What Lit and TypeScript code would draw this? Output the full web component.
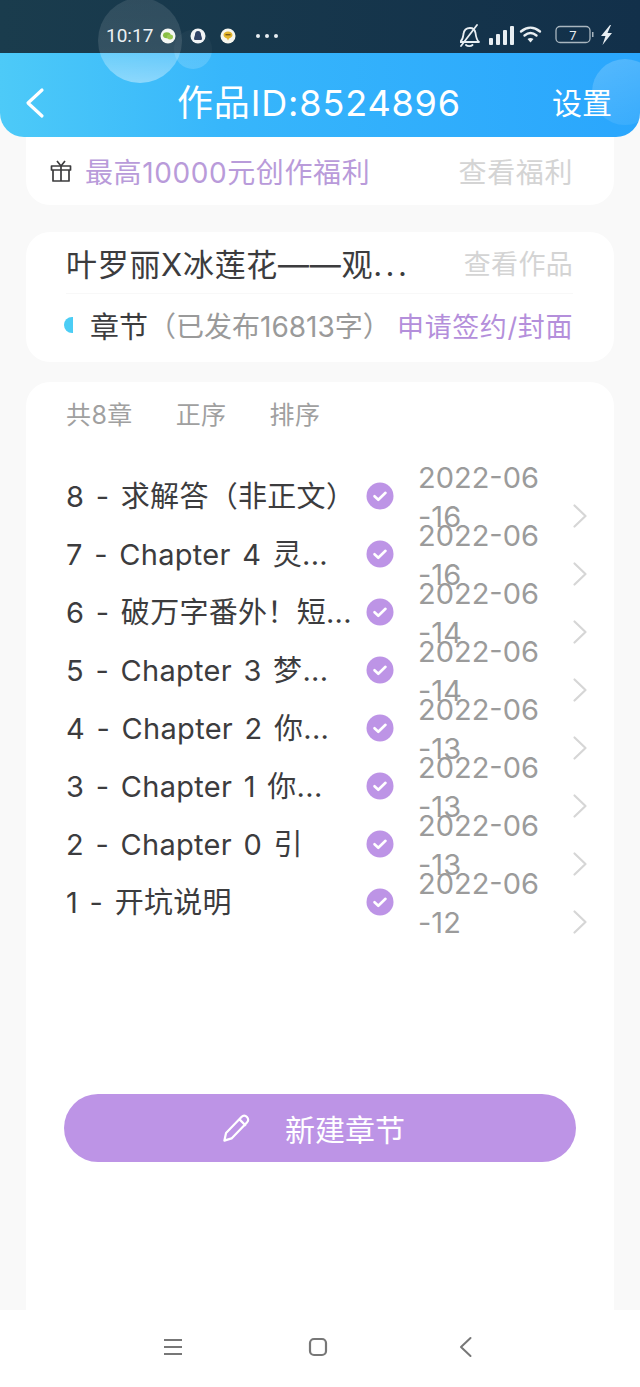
import { LitElement, html, css, svg } from "lit";
import { customElement } from "lit/decorators.js";

const chapters = [
  { title: "8 - 求解答（非正文）", date: "2022-06-16" },
  { title: "7 - Chapter 4 灵...", date: "2022-06-16" },
  { title: "6 - 破万字番外！短...", date: "2022-06-14" },
  { title: "5 - Chapter 3 梦...", date: "2022-06-14" },
  { title: "4 - Chapter 2 你...", date: "2022-06-13" },
  { title: "3 - Chapter 1 你...", date: "2022-06-13" },
  { title: "2 - Chapter 0 引", date: "2022-06-13" },
  { title: "1 - 开坑说明", date: "2022-06-12" },
];

const checkIcon = svg`<svg width="28" height="28" viewBox="0 0 28 28"><circle cx="14" cy="14" r="13.5" fill="#bd94e6"/><path d="M8.5 14.2l3.8 3.6 7.2-7" fill="none" stroke="#fff" stroke-width="2.6" stroke-linecap="round" stroke-linejoin="round"/></svg>`;

const chevron = svg`<svg width="16" height="26" viewBox="0 0 16 26"><path d="M2.5 2.5L13.5 13 2.5 23.5" fill="none" stroke="#d6d6d6" stroke-width="2.2" stroke-linecap="round" stroke-linejoin="round"/></svg>`;

@customElement("app-root")
export class AppRoot extends LitElement {
  static styles = css`
    :host {
      display: block;
      width: 640px;
      height: 1387px;
      overflow: hidden;
      position: relative;
      background: #f9f9f9;
      font-family: "Inter", "Noto Sans CJK SC", sans-serif;
      color: #3c3c3e;
    }
    .page {
      display: flex;
      flex-direction: column;
      height: 1387px;
    }
    .top {
      position: relative;
      z-index: 2;
      height: 137px;
      flex: none;
    }
    .top-bg {
      height: 137px;
      border-radius: 0 0 24px 24px;
      overflow: hidden;
      position: relative;
    }
    .status {
      height: 53px;
      display: flex;
      align-items: center;
      background: linear-gradient(90deg, #1a3c4d, #12304a);
      color: #e8eef2;
      box-sizing: border-box;
      padding: 18px 0 0 106px;
    }
    .time {
      font-family: "Roboto", sans-serif;
      font-size: 19px;
      width: 54px;
    }
    .notes {
      display: flex;
      gap: 14px;
      align-items: center;
    }
    .dots {
      display: flex;
      gap: 5px;
      margin-left: 20px;
    }
    .dots i {
      width: 4px;
      height: 4px;
      border-radius: 50%;
      background: #e8eef2;
    }
    .status-right {
      margin-left: auto;
      margin-right: 20px;
      display: flex;
      align-items: center;
    }
    .nav {
      height: 84px;
      box-sizing: border-box;
      background: linear-gradient(90deg, #4dcaf8, #37b6fb 35%, #2aa6fd);
      display: flex;
      align-items: center;
      justify-content: space-between;
      padding: 16px 28px 0 24px;
      color: #fff;
    }
    .nav .title {
      font-size: 36px;
      line-height: 44px;
      margin-left: 40px;
      letter-spacing: 0.85px;
    }
    .nav .set {
      font-size: 30px;
      line-height: 40px;
    }
    .bubble {
      position: absolute;
      border-radius: 50%;
      pointer-events: none;
    }
    .b1 {
      left: 98px;
      top: -2px;
      width: 84px;
      height: 85px;
      background: linear-gradient(180deg, rgba(255,255,255,0.1) 0, rgba(255,255,255,0.12) 65%, rgba(255,255,255,0.22) 65%, rgba(255,255,255,0.4) 100%);
    }
    .b2 {
      left: 174px;
      top: 30px;
      width: 38px;
      height: 39px;
      background: linear-gradient(180deg, rgba(255,255,255,0.03) 0, rgba(255,255,255,0.03) 59%, rgba(255,255,255,0.14) 59%, rgba(255,255,255,0.16) 100%);
    }
    .b3 {
      left: 592px;
      top: 59px;
      width: 66px;
      height: 66px;
      background: linear-gradient(160deg, rgba(255,255,255,0.2), rgba(255,255,255,0.06));
    }
    .content {
      flex: 1;
      display: flex;
      flex-direction: column;
      padding: 0 26px;
      min-height: 0;
    }
    .card {
      background: #fff;
      border-radius: 24px;
    }
    .welfare {
      margin-top: -24px;
      height: 92px;
      flex: none;
      box-sizing: border-box;
      padding: 24px 41px 0 24px;
      display: flex;
      align-items: center;
      font-size: 28px;
      letter-spacing: 0.6px;
    }
    .welfare svg {
      margin-right: 13px;
    }
    .purple {
      color: #b99bda;
    }
    .more {
      margin-left: auto;
      color: #d4d4d4;
    }
    .more-small {
      font-size: 27px;
      letter-spacing: 0.3px;
    }
    .work {
      margin-top: 27px;
      height: 130px;
      flex: none;
      box-sizing: border-box;
      padding: 0 41px 0 40px;
      font-size: 28px;
    }
    .work-top {
      height: 61px;
      display: flex;
      align-items: center;
      border-bottom: 1px solid #f8f8f8;
    }
    .work-name {
      white-space: nowrap;
      font-size: 31px;
      letter-spacing: 0.7px;
    }
    .work-name span {
      letter-spacing: 3.5px;
    }
    .work-sub {
      height: 62px;
      display: flex;
      align-items: center;
      margin-left: -2px;
    }
    .half {
      width: 9px;
      height: 16px;
      border-radius: 8px 0 0 8px;
      background: #4bcdf5;
      margin-right: 17px;
    }
    .sub-name {
      font-size: 29px;
    }
    .sub-count {
      color: #9a9a9a;
    }
    .sign {
      margin-left: auto;
      color: #b48fdb;
      font-size: 27px;
      letter-spacing: 0.6px;
    }
    .list {
      margin-top: 20px;
      flex: 1;
      border-radius: 24px 24px 0 0;
      padding: 0 38px 0 40px;
      display: flex;
      flex-direction: column;
    }
    .tools {
      display: flex;
      gap: 43px;
      height: 62px;
      align-items: center;
      font-size: 25px;
      letter-spacing: 0.4px;
      color: #a0a0a0;
    }
    .rows {
      margin-top: 23px;
    }
    .row {
      height: 58px;
      display: flex;
      align-items: center;
    }
    .row-title {
      width: 288px;
      white-space: nowrap;
      font-size: 29px;
      letter-spacing: 0.3px;
      word-spacing: 3px;
      flex: none;
      padding-bottom: 4px;
      box-sizing: border-box;
    }
    .row-check {
      flex: none;
      margin-left: 12px;
      display: flex;
    }
    .row-date {
      flex: none;
      width: 126px;
      margin-left: 24px;
      margin-top: 2px;
      font-size: 29px;
      line-height: 39px;
      color: #9b9b9b;
      word-break: break-all;
      height: 78px;
    }
    .row-arrow {
      margin-left: 28px;
      margin-top: 40px;
      display: flex;
    }
    .add {
      margin: 163px 0 0 -2px;
      width: 512px;
      height: 68px;
      box-sizing: border-box;
      padding-right: 15px;
      border-radius: 34px;
      background: #bd94e6;
      color: #fff;
      font-size: 30px;
      display: flex;
      align-items: center;
      justify-content: center;
      gap: 32px;
    }
    .sysnav {
      height: 77px;
      flex: none;
      box-sizing: border-box;
      background: #fff;
      display: flex;
      align-items: center;
      padding: 0 0 3px 163px;
    }
    .sysnav svg {
      display: block;
    }
    .sys-home {
      margin-left: 125px;
    }
    .sys-back {
      margin-left: 131px;
    }
  `;

  renderStatusRight() {
    return html`<svg width="160" height="26" viewBox="0 0 160 26">
      <g transform="translate(-3 0)" fill="none" stroke="#e8eef2" stroke-width="1.8" stroke-linecap="round" stroke-linejoin="round">
        <path d="M3 19c3-2 3-5 3.500-8 .5-4 3-6 6.500-6 3 0 5 2 5.500 5 .5 4 1 7 3.500 9z"/>
        <path d="M9 22c1.500 1.500 5 1.500 6.500 0"/>
        <path d="M4 23L20 2"/>
      </g>
      <g fill="#e8eef2">
        <rect x="29" y="15" width="4" height="7" rx="1"/>
        <rect x="36" y="11" width="4" height="11" rx="1"/>
        <rect x="43" y="7" width="4" height="15" rx="1"/>
        <rect x="50" y="3" width="4" height="19" rx="1"/>
      </g>
      <g fill="none" stroke="#e8eef2" stroke-width="2.400" stroke-linecap="round">
        <path d="M61 8.500c6-5 13-5 19 0"/>
        <path d="M64.500 12.500c4-3.300 8-3.300 12 0"/>
      </g>
      <path d="M67.500 16c2-1.500 4-1.500 6 0l-3 3.500z" fill="#e8eef2"/>
      <rect x="96" y="3.500" width="34" height="16" rx="4" fill="none" stroke="#a9b6bf" stroke-width="1.300"/>
      <rect x="132" y="9" width="1.500" height="5" fill="#a9b6bf"/>
      <text x="113" y="17" text-anchor="middle" fill="#e8eef2" font-size="13" font-family="Roboto, sans-serif">7</text>
      <path d="M150 2l-9 11h4.500l-3 9 9.500-12h-4.500l3.500-8z" fill="#e8eef2"/>
    </svg>`;
  }

  render() {
    return html`<div class="page">
      <div class="top">
        <div class="top-bg">
          <div class="status">
            <span class="time">10:17</span>
            <div class="notes">
              <svg width="16" height="16" viewBox="0 0 16 16"><circle cx="8" cy="8" r="7.500" fill="#f4f6f2"/><ellipse cx="6.800" cy="7.300" rx="3.800" ry="3" fill="#78b62c"/><ellipse cx="10" cy="9" rx="3" ry="2.400" fill="#8fc43f"/></svg>
              <svg width="16" height="16" viewBox="0 0 16 16"><circle cx="8" cy="8" r="7.500" fill="#f2f4f6"/><path d="M8 3c2 0 3 1.600 3 3.500 0 1 1 3 1 4.500 0 1-1.500 1-2 1H6c-.5 0-2 0-2-1 0-1.500 1-3.500 1-4.500C5 4.600 6 3 8 3z" fill="#2b3f63"/></svg>
              <svg width="16" height="16" viewBox="0 0 16 16"><circle cx="8" cy="8" r="7.500" fill="#f6f6ee"/><path d="M3.500 7c0-2 2-3.500 4.500-3.500S12.500 5 12.500 7 10.500 10 9 10.500L8 12.500l-1-2C5.500 10 3.500 9 3.500 7z" fill="#e3b52c"/><rect x="5.500" y="6" width="5" height="1.400" fill="#7a5a1b"/></svg>
            </div>
            <div class="dots"><i></i><i></i><i></i></div>
            <div class="status-right">${this.renderStatusRight()}</div>
          </div>
          <div class="nav">
            <svg width="22" height="32" viewBox="0 0 22 32"><path d="M18 3L4 16l14 13" fill="none" stroke="#fff" stroke-width="3.200" stroke-linecap="round" stroke-linejoin="round"/></svg>
            <span class="title">作品ID:8524896</span>
            <span class="set">设置</span>
          </div>
          <div class="bubble b1"></div>
          <div class="bubble b2"></div>
          <div class="bubble b3"></div>
        </div>
      </div>

      <div class="content">
        <div class="card welfare">
          <svg width="22" height="24" viewBox="0 0 22 24"><g fill="none" stroke="#3c3c3e" stroke-width="1.700" stroke-linejoin="round"><rect x="1.500" y="7" width="19" height="4"/><path d="M3 11v11h16V11M11 7v15"/><path d="M11 7L7 2M11 7l4-5"/></g></svg>
          <span class="purple">最高10000元创作福利</span>
          <span class="more">查看福利</span>
        </div>

        <div class="card work">
          <div class="work-top">
            <span class="work-name">叶罗丽X冰莲花——观<span>...</span></span>
            <span class="more more-small">查看作品</span>
          </div>
          <div class="work-sub">
            <i class="half"></i>
            <span class="sub-name">章节</span>
            <span class="sub-count">（已发布16813字）</span>
            <span class="sign">申请签约/封面</span>
          </div>
        </div>

        <div class="card list">
          <div class="tools"><span>共8章</span><span>正序</span><span>排序</span></div>
          <div class="rows">
            ${chapters.map(
              (c) => html`<div class="row">
                <span class="row-title">${c.title}</span>
                <span class="row-check">${checkIcon}</span>
                <span class="row-date">${c.date}</span>
                <span class="row-arrow">${chevron}</span>
              </div>`
            )}
          </div>
          <div class="add">
            <svg width="33" height="33" viewBox="0 0 30 30"><path d="M4 26l1.500-7L19.500 4.500c1.500-1.500 3.500-1.500 5 0s1.500 3.500 0 5L10.500 24z M17.500 6.500l6 6" fill="none" stroke="#fff" stroke-width="2" stroke-linejoin="round"/></svg>
            <span>新建章节</span>
          </div>
        </div>
      </div>

      <div class="sysnav">
        <svg width="20" height="18" viewBox="0 0 20 18"><path d="M1 2h18M1 9h18M1 16h18" stroke="#777" stroke-width="2"/></svg>
        <svg class="sys-home" width="20" height="20" viewBox="0 0 20 20"><rect x="2" y="2" width="16" height="16" rx="4" fill="none" stroke="#777" stroke-width="2.200"/></svg>
        <svg class="sys-back" width="14" height="22" viewBox="0 0 14 22"><path d="M11.500 2L2 11l9.500 9" fill="none" stroke="#777" stroke-width="2" stroke-linecap="round" stroke-linejoin="round"/></svg>
      </div>
    </div>`;
  }
}
